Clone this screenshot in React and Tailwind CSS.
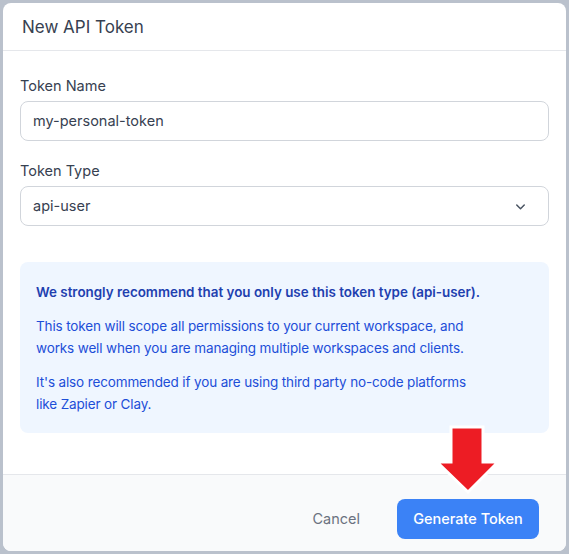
import React from "react";

export default function App() {
  return (
    <div
      className="w-[569px] h-[554px] bg-[#bac1cc] pt-[3px] pl-[3px] overflow-hidden"
      style={{ fontFamily: "Inter, 'Noto Sans', sans-serif" }}
    >
      <div className="relative w-[563px] h-[548px] bg-white rounded-lg overflow-hidden flex flex-col">
        {/* header */}
        <div className="h-[48px] border-b border-[#e5e7eb] flex items-center pl-[19px] pt-[3px]">
          <span className="text-[17px] text-[#374151]">New API Token</span>
        </div>
        {/* body */}
        <div className="flex-1 px-[17px] pt-[25px]">
          <label className="block text-[14.5px] leading-5 text-[#374151]">Token Name</label>
          <div className="mt-[5px] h-[40px] w-[529px] rounded-lg border border-[#d1d5db] flex items-center px-[12px] text-[14.5px] text-[#374151]">
            my-personal-token
          </div>
          <label className="block mt-[20px] text-[14.5px] leading-5 text-[#374151]">Token Type</label>
          <div className="mt-[5px] h-[40px] w-[529px] rounded-lg border border-[#d1d5db] flex items-center justify-between pl-[12px] pr-[20px] text-[14.5px] text-[#374151]">
            <span>api-user</span>
            <svg width="15" height="15" viewBox="0 0 20 20" fill="none" stroke="#4b5563" strokeWidth="2" strokeLinecap="round" strokeLinejoin="round">
              <path d="M5 8l5 5 5-5" />
            </svg>
          </div>
          <div className="mt-[36px] w-[529px] h-[171px] rounded-lg bg-[#eff6ff] pl-[16px] pr-[60px] pt-[19px]">
            <p className="text-[13.4px] leading-[22px] font-semibold text-[#1e40af] whitespace-nowrap">
              We strongly recommend that you only use this token type (api-user).
            </p>
            <p className="mt-[12px] text-[13.5px] tracking-[-0.01em] leading-[22px] text-[#1d4ed8]">
              This token will scope all permissions to your current workspace, and works well when you are managing multiple workspaces and clients.
            </p>
            <p className="mt-[12px] text-[13.5px] tracking-[-0.01em] leading-[22px] text-[#1d4ed8]">
              It's also recommended if you are using third party no-code platforms like Zapier or Clay.
            </p>
          </div>
        </div>
        {/* footer */}
        <div className="h-[77px] border-t border-[#e5e7eb] bg-[#f9fafb] flex items-start justify-end pt-[24px] pr-[27px]">
          <button className="h-[40px] px-[16px] mr-[21px] text-[14.5px] text-[#6b7280]">Cancel</button>
          <button className="h-[40px] w-[142px] rounded-lg bg-[#3b82f6] text-white text-[14.5px] font-medium">
            Generate Token
          </button>
        </div>
        {/* annotation arrow */}
        <svg className="absolute left-[430px] top-[420px]" width="76" height="80" viewBox="0 0 76 80">
          <path
            d="M18 4 H50 V39 H65 L35 69 L4 39 H18 Z"
            fill="#ed1c24"
            stroke="white"
            strokeWidth="3"
            strokeLinejoin="miter"
          />
        </svg>
      </div>
    </div>
  );
}
